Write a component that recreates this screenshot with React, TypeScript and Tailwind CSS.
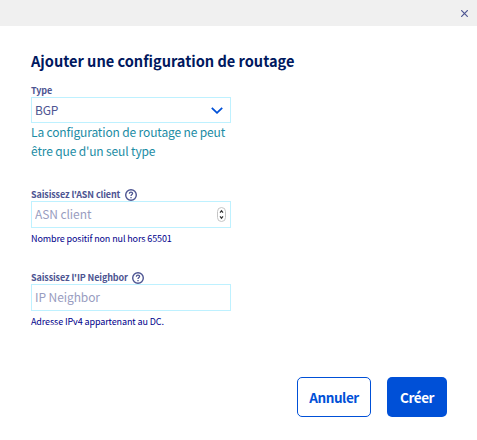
import { useState } from "react";

function HelpIcon() {
  return (
    <svg viewBox="0 0 12 12" className="size-3 shrink-0" fill="none" stroke="#4d5592">
      <circle cx="6" cy="6" r="5.3" strokeWidth="1.4" />
      <path d="M4.3 4.8C4.4 3.7 5.1 3.2 6 3.2s1.6.5 1.6 1.3C7.6 5.6 6 5.6 6 7" strokeWidth="1.3" />
      <path d="M6 8v1.2" strokeWidth="1.3" />
    </svg>
  );
}

function Label({ text, help }: { text: string; help?: boolean }) {
  return (
    <div className="flex h-3 items-center gap-[4.5px] text-[9px] leading-3 font-bold tracking-[-0.12px] text-[#4d5592]">
      <span className="whitespace-nowrap">{text}</span>
      {help && <HelpIcon />}
    </div>
  );
}

function Stepper() {
  return (
    <svg viewBox="0 0 9 15" className="h-[15px] w-[9px] shrink-0" fill="none">
      <rect x=".5" y=".5" width="8" height="14" rx="4" stroke="#c4c4c4" />
      <path d="M3 5.6 4.5 3.8 6 5.6M3 9.4l1.5 1.8L6 9.4" stroke="#333" strokeWidth="1.2" />
    </svg>
  );
}

function Field({ label, placeholder, hint, stepper }: { label: string; placeholder: string; hint: string; stepper?: boolean }) {
  const [value, setValue] = useState("");
  return (
    <div className="flex flex-col">
      <Label text={label} help />
      <div className="flex h-[27px] items-center border border-[#bef1ff] pr-[4px] pl-[3px]">
        <input
          value={value}
          onChange={(e) => setValue(e.target.value)}
          placeholder={placeholder}
          className="mb-0.5 h-5 w-0 grow text-[12px] leading-5 tracking-[-0.08px] text-[#4d5592] outline-none placeholder:text-[#999dbf]"
        />
        {stepper && <Stepper />}
      </div>
      <p className="mt-[3px] text-[9px] leading-4 tracking-[-0.11px] whitespace-nowrap text-[#00008b]">{hint}</p>
    </div>
  );
}

export default function App() {
  return (
    <div className="flex h-[440px] w-[477px] flex-col bg-white font-['Noto_Sans_CJK_SC','Noto_Sans',sans-serif]">
      <header className="flex h-[26px] shrink-0 items-center justify-end bg-[#f0f0f0] pr-[9px]">
        <svg viewBox="0 0 7 7" className="size-[7px]" stroke="#4d5592" strokeWidth="1.2">
          <path d="M.2.2l6.6 6.6M6.8.2.2 6.8" />
        </svg>
      </header>
      <h1 className="mt-[23px] ml-[31px] text-[14.6px] leading-6 font-bold tracking-[-0.02px] whitespace-nowrap text-[#00185e]">
        Ajouter une configuration de routage
      </h1>
      <main className="mt-3 ml-[31px] flex w-[200px] flex-col">
        <Label text="Type" />
        <div className="flex h-[26px] items-center justify-between border border-[#bef1ff] pr-[7px] pl-[3px] text-[12px] leading-5 tracking-[-0.15px] text-[#4d5592]">
          <span>BGP</span>
          <svg viewBox="0 0 12 7" className="h-[7px] w-3" fill="none" stroke="#0050d7" strokeWidth="1.8">
            <path d="M.8.8 6 5.8 11.2.8" />
          </svg>
        </div>
        <p className="-mt-px mb-px text-[12px] leading-[19px] tracking-[-0.14px] whitespace-nowrap text-[#1b8ca4]">
          La configuration de routage ne peut
          <br />
          être que d'un seul type
        </p>
        <div className="mt-7 flex flex-col gap-[25px]">
          <Field label="Saisissez l'ASN client" placeholder="ASN client" hint="Nombre positif non nul hors 65501" stepper />
          <Field label="Saissisez l'IP Neighbor" placeholder="IP Neighbor" hint="Adresse IPv4 appartenant au DC." />
        </div>
      </main>
      <footer className="mt-auto mb-[23px] flex justify-end gap-4 pr-[30px] text-[13.5px] leading-5 font-bold tracking-[-0.42px]">
        <button className="h-10 w-[74px] rounded-[5px] border border-[#0050d7] text-[#0050d7]">Annuler</button>
        <button className="h-10 w-[60px] rounded-[5px] bg-[#0050d7] text-white">Créer</button>
      </footer>
    </div>
  );
}
